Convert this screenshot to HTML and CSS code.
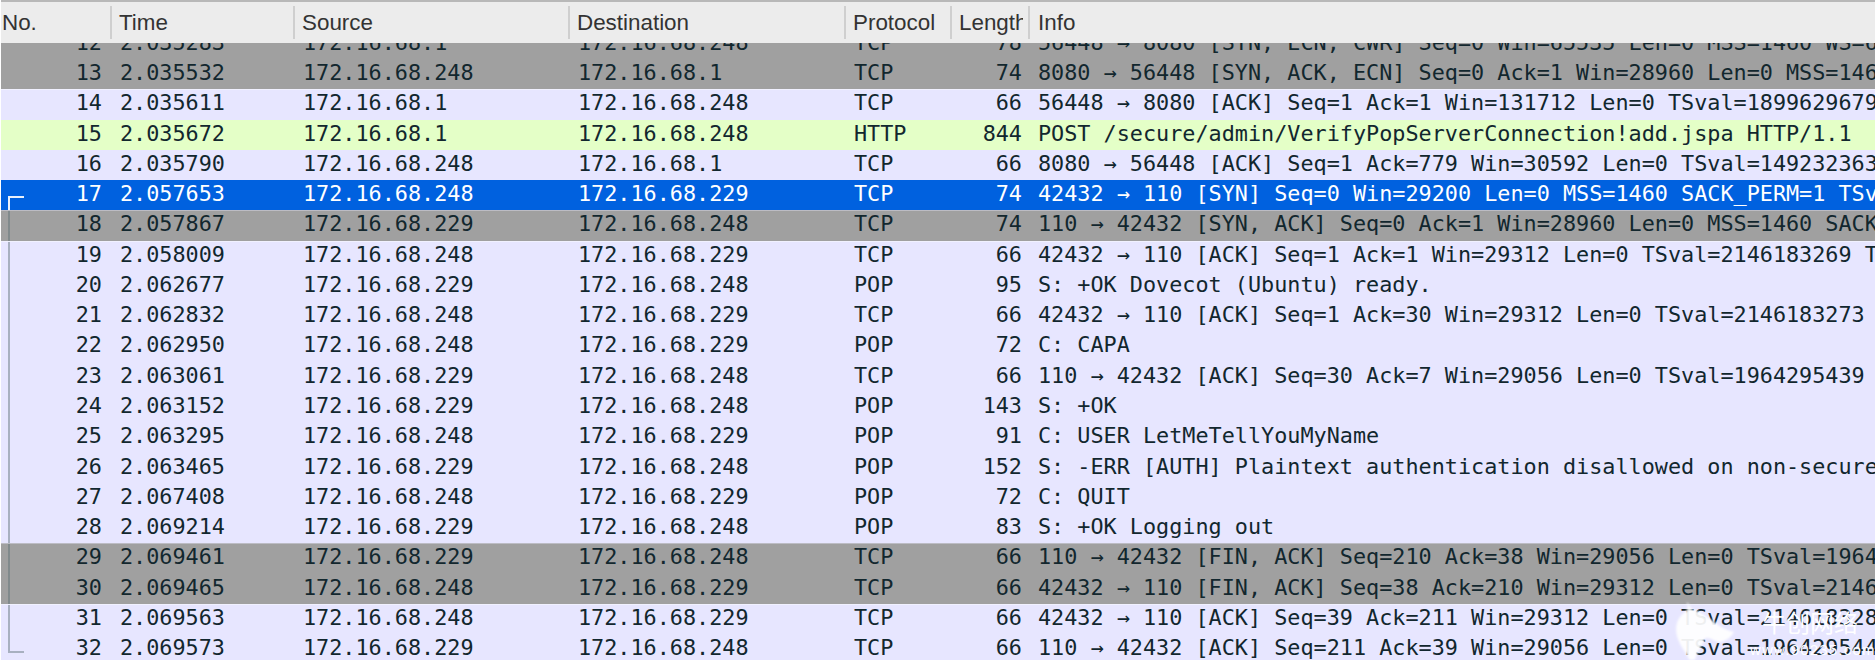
FILE: index.html
```html
<!DOCTYPE html>
<html lang="en">
<head>
<meta charset="utf-8">
<title>Packet list</title>
<link rel="stylesheet" href="styles.css">
</head>
<body>
<div class="app">
  <div class="head">
    <div class="hc hc-no">No.</div><div class="hc">Time</div><div class="hc">Source</div><div class="hc">Destination</div><div class="hc">Protocol</div><div class="hc hc-len"><span class="clip">Length</span></div><div class="hc hc-last">Info</div>
  </div>
  <div class="viewport">
    <div class="list">
      <div class="row gray"><span class="no">12</span><span>2.035283</span><span>172.16.68.1</span><span>172.16.68.248</span><span>TCP</span><span class="len">78</span><span>56448 → 8080 [SYN, ECN, CWR] Seq=0 Win=65535 Len=0 MSS=1460 WS=64 TSval=1899629679</span></div>
      <div class="row gray"><span class="no">13</span><span>2.035532</span><span>172.16.68.248</span><span>172.16.68.1</span><span>TCP</span><span class="len">74</span><span>8080 → 56448 [SYN, ACK, ECN] Seq=0 Ack=1 Win=28960 Len=0 MSS=1460 SACK_PERM=1</span></div>
      <div class="row"><span class="no">14</span><span>2.035611</span><span>172.16.68.1</span><span>172.16.68.248</span><span>TCP</span><span class="len">66</span><span>56448 → 8080 [ACK] Seq=1 Ack=1 Win=131712 Len=0 TSval=1899629679 TSecr=1</span></div>
      <div class="row http"><span class="no">15</span><span>2.035672</span><span>172.16.68.1</span><span>172.16.68.248</span><span>HTTP</span><span class="len">844</span><span>POST /secure/admin/VerifyPopServerConnection!add.jspa HTTP/1.1</span></div>
      <div class="row"><span class="no">16</span><span>2.035790</span><span>172.16.68.248</span><span>172.16.68.1</span><span>TCP</span><span class="len">66</span><span>8080 → 56448 [ACK] Seq=1 Ack=779 Win=30592 Len=0 TSval=1492323634 TSecr=1</span></div>
      <div class="row sel tree-first"><span class="no">17</span><span>2.057653</span><span>172.16.68.248</span><span>172.16.68.229</span><span>TCP</span><span class="len">74</span><span>42432 → 110 [SYN] Seq=0 Win=29200 Len=0 MSS=1460 SACK_PERM=1 TSval=2146183269</span></div>
      <div class="row gray tree-mid"><span class="no">18</span><span>2.057867</span><span>172.16.68.229</span><span>172.16.68.248</span><span>TCP</span><span class="len">74</span><span>110 → 42432 [SYN, ACK] Seq=0 Ack=1 Win=28960 Len=0 MSS=1460 SACK_PERM=1 TSval=1</span></div>
      <div class="row tree-mid"><span class="no">19</span><span>2.058009</span><span>172.16.68.248</span><span>172.16.68.229</span><span>TCP</span><span class="len">66</span><span>42432 → 110 [ACK] Seq=1 Ack=1 Win=29312 Len=0 TSval=2146183269 TSecr=1964295</span></div>
      <div class="row tree-mid"><span class="no">20</span><span>2.062677</span><span>172.16.68.229</span><span>172.16.68.248</span><span>POP</span><span class="len">95</span><span>S: +OK Dovecot (Ubuntu) ready.</span></div>
      <div class="row tree-mid"><span class="no">21</span><span>2.062832</span><span>172.16.68.248</span><span>172.16.68.229</span><span>TCP</span><span class="len">66</span><span>42432 → 110 [ACK] Seq=1 Ack=30 Win=29312 Len=0 TSval=2146183273 TSecr=196429</span></div>
      <div class="row tree-mid"><span class="no">22</span><span>2.062950</span><span>172.16.68.248</span><span>172.16.68.229</span><span>POP</span><span class="len">72</span><span>C: CAPA</span></div>
      <div class="row tree-mid"><span class="no">23</span><span>2.063061</span><span>172.16.68.229</span><span>172.16.68.248</span><span>TCP</span><span class="len">66</span><span>110 → 42432 [ACK] Seq=30 Ack=7 Win=29056 Len=0 TSval=1964295439 TSecr=214618</span></div>
      <div class="row tree-mid"><span class="no">24</span><span>2.063152</span><span>172.16.68.229</span><span>172.16.68.248</span><span>POP</span><span class="len">143</span><span>S: +OK</span></div>
      <div class="row tree-mid"><span class="no">25</span><span>2.063295</span><span>172.16.68.248</span><span>172.16.68.229</span><span>POP</span><span class="len">91</span><span>C: USER LetMeTellYouMyName</span></div>
      <div class="row tree-mid"><span class="no">26</span><span>2.063465</span><span>172.16.68.229</span><span>172.16.68.248</span><span>POP</span><span class="len">152</span><span>S: -ERR [AUTH] Plaintext authentication disallowed on non-secure (SSL/TLS) connections.</span></div>
      <div class="row tree-mid"><span class="no">27</span><span>2.067408</span><span>172.16.68.248</span><span>172.16.68.229</span><span>POP</span><span class="len">72</span><span>C: QUIT</span></div>
      <div class="row tree-mid"><span class="no">28</span><span>2.069214</span><span>172.16.68.229</span><span>172.16.68.248</span><span>POP</span><span class="len">83</span><span>S: +OK Logging out</span></div>
      <div class="row gray tree-mid"><span class="no">29</span><span>2.069461</span><span>172.16.68.229</span><span>172.16.68.248</span><span>TCP</span><span class="len">66</span><span>110 → 42432 [FIN, ACK] Seq=210 Ack=38 Win=29056 Len=0 TSval=1964295440 TSecr=2</span></div>
      <div class="row gray tree-mid"><span class="no">30</span><span>2.069465</span><span>172.16.68.248</span><span>172.16.68.229</span><span>TCP</span><span class="len">66</span><span>42432 → 110 [FIN, ACK] Seq=38 Ack=210 Win=29312 Len=0 TSval=2146183280 TSecr=1</span></div>
      <div class="row tree-mid"><span class="no">31</span><span>2.069563</span><span>172.16.68.248</span><span>172.16.68.229</span><span>TCP</span><span class="len">66</span><span>42432 → 110 [ACK] Seq=39 Ack=211 Win=29312 Len=0 TSval=2146183280 TSecr=1964</span></div>
      <div class="row tree-last"><span class="no">32</span><span>2.069573</span><span>172.16.68.229</span><span>172.16.68.248</span><span>TCP</span><span class="len">66</span><span>110 → 42432 [ACK] Seq=211 Ack=39 Win=29056 Len=0 TSval=1964295440 TSecr=2146</span></div>
    </div>
  </div>
  <div class="mark">
    <svg class="bull" viewBox="0 0 300 210" aria-hidden="true"><path d="M140 35C150 45 150 55 160 60C175 60 190 75 215 90C235 105 250 120 282 125C275 140 262 150 245 155C225 160 215 140 195 145C185 170 170 190 165 210L148 210C140 190 125 175 115 150C105 125 105 95 125 75C135 65 150 60 140 35Z"/></svg>
    <div class="mark-text">
      <div class="mark-name">牛创网络</div>
      <div class="mark-url">www.90235.com</div>
    </div>
  </div>
</div>
</body>
</html>
```
FILE: styles.css
```css
* { box-sizing: border-box; }
html, body { margin: 0; height: 100%; background: #fff; overflow: hidden; }
.app { position: relative; width: 1875px; height: 660px; padding-left: 1px; display: flex; flex-direction: column; overflow: hidden; }
.head, .row { display: grid; grid-template-columns: 110px 183px 275px 276px 106px 78px 1fr; }
.head { height: 43px; flex: none; background: #ececec; border-top: 2px solid #b8b8b8; align-items: center; font: 22.4px "Liberation Sans", Arial, sans-serif; color: #333; }
.hc { height: 33px; line-height: 33px; padding-left: 8px; margin-right: -1px; border-right: 2px solid #cfcfcf; overflow: hidden; white-space: nowrap; }
.hc-no { padding-left: 1px; }
.hc-last { border-right: 0; margin-right: 0; padding-left: 9px; }
.clip { display: block; width: 64px; overflow: hidden; }
.viewport { flex: 1; overflow: hidden; min-height: 0; }
.list { margin-top: -14.2px; }
.row { position: relative; height: 30.27px; background: #e7e6ff; color: #12272e; font: 21.8px/28.6px "DejaVu Sans Mono", monospace; white-space: nowrap; }
.row > span { padding-left: 9px; overflow: hidden; }
.row > .no { text-align: right; padding: 0 9px 0 0; }
.row > .len { text-align: right; padding: 0 7px 0 0; }
.gray { background: #a0a0a0; }
.http { background: #e4ffc7; }
.sel { background: #0061df; color: #fff; }
.gray + .row:not(.gray)::after { content: ""; position: absolute; left: 0; right: 0; top: 0; height: 1px; background: #f1f1ff; }
.row:not(.gray) + .gray::after { content: ""; position: absolute; left: 0; right: 0; top: 0; height: 1px; background: #bcbcc4; }
.tree-first::before, .tree-mid::before, .tree-last::before { content: ""; position: absolute; left: 7px; width: 14px; }
.tree-first::before { top: 16px; bottom: 0; border-left: 2px solid #e8f0fb; border-top: 2px solid #e8f0fb; }
.tree-mid::before { top: 0; bottom: 0; border-left: 2px solid rgba(90, 110, 115, 0.45); }
.tree-last::before { top: 0; height: 17px; border-left: 2px solid rgba(90, 110, 115, 0.45); border-bottom: 2px solid rgba(90, 110, 115, 0.45); }
.mark { position: absolute; z-index: 2; left: 1640px; top: 590px; width: 235px; height: 70px; display: flex; color: #fff; }
.bull { width: 100px; height: 70px; flex: none; fill: #fff; opacity: 0.93; filter: blur(0.8px); }
.mark-text { margin: 19px 0 0 22px; display: flex; flex-direction: column; flex: none; }
.mark-name { font: 24px/26px "Noto Sans CJK SC", sans-serif; white-space: nowrap; }
.mark-url { margin: 7px 0 0 -12px; font: 15px/15px "Liberation Sans", Arial, sans-serif; letter-spacing: 1.2px; white-space: nowrap; }
```
